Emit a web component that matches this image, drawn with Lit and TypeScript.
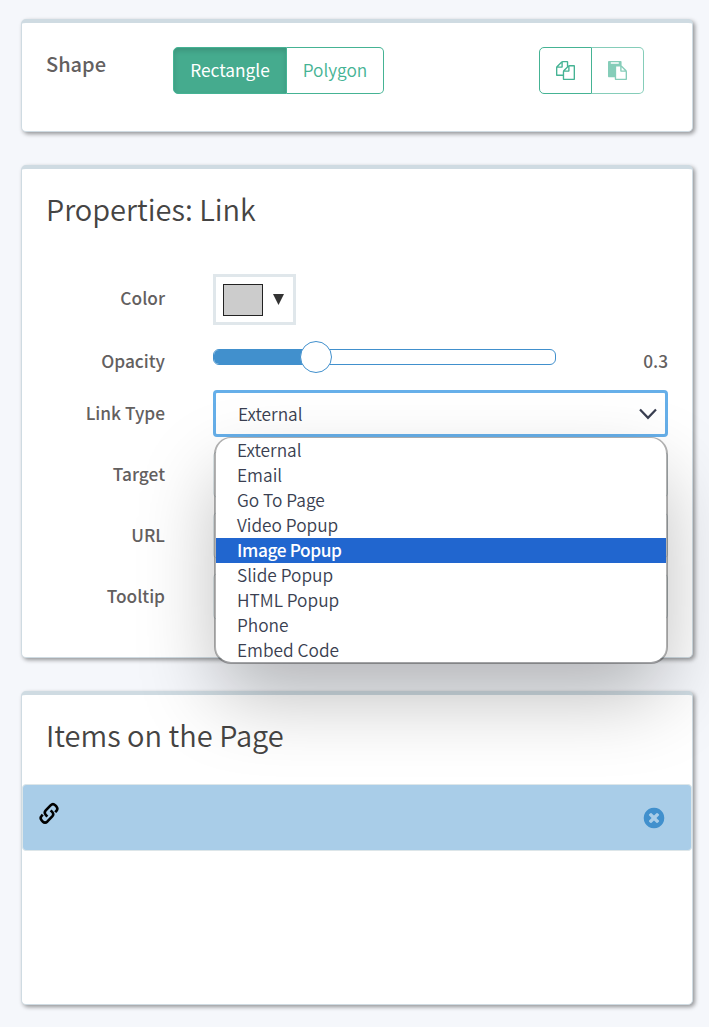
import { LitElement, html, css, svg } from "lit";
import { customElement, property } from "lit/decorators.js";
import { classMap } from "lit/directives/class-map.js";

const ICONS: Record<string, string> = {
  copy: "M1696 384q40 0 68 28t28 68v1216q0 40-28 68t-68 28h-960q-40 0-68-28t-28-68v-288h-544q-40 0-68-28t-28-68v-672q0-40 20-88t48-76l408-408q28-28 76-48t88-20h416q40 0 68 28t28 68v328q68-40 128-40h416zm-544 213l-299 299h299v-299zm-640-384l-299 299h299v-299zm196 647l316-316v-416h-384v416q0 40-28 68t-68 28h-416v640h512v-256q0-40 20-88t48-76zm956 804v-1152h-384v416q0 40-28 68t-68 28h-416v640h896z",
  paste: "M768 1664h896v-640h-416q-40 0-68-28t-28-68v-416h-384v1152zm256-1440v-64q0-13-9.5-22.5t-22.5-9.5h-704q-13 0-22.5 9.5t-9.5 22.5v64q0 13 9.5 22.5t22.5 9.5h704q13 0 22.5-9.5t9.5-22.5zm256 672h299l-299-299v299zm512 128v672q0 40-28 68t-68 28h-960q-40 0-68-28t-28-68v-160h-544q-40 0-68-28t-28-68v-1344q0-40 28-68t68-28h1088q40 0 68 28t28 68v328q21 13 36 28l408 408q28 28 48 76t20 88z",
  remove: "M1277 1122q0-26-19-45l-181-181 181-181q19-19 19-45 0-27-19-46l-90-90q-19-19-46-19-26 0-45 19l-181 181-181-181q-19-19-45-19-27 0-46 19l-90 90q-19 19-19 46 0 26 19 45l181 181-181 181q-19 19-19 45 0 27 19 46l90 90q19 19 46 19 26 0 45-19l181-181 181 181q19 19 45 19 27 0 46-19l90-90q19-19 19-46zm387-226q0 209-103 385.5t-279.5 279.5-385.5 103-385.5-103-279.5-279.5-103-385.5 103-385.5 279.5-279.5 385.5-103 385.5 103 279.5 279.5 103 385.5z",
};

@customElement("glyph-icon")
class GlyphIcon extends LitElement {
  static styles = css`
    :host { display: block; }
    .svg { display: block; width: 100%; height: 100%; fill: currentColor; }
    .heavy { stroke: #a9cde8; stroke-width: 0; }
  `;
  @property() name = "";
  render() {
    return html`<svg class="svg" viewBox="0 0 1792 1792">${svg`<path d=${ICONS[this.name]}></path>`}</svg>`;
  }
}

@customElement("app-root")
class AppRoot extends LitElement {
  static styles = css`
    :host {
      display: block;
      box-sizing: border-box;
      height: 1027px;
      padding: 19px 16px 0 21px;
      overflow: hidden;
      background: #f5f7fb;
      color: #63605f;
      font-family: "Noto Sans CJK SC", "Source Sans Pro", sans-serif;
    }
    * { box-sizing: border-box; }
    .card {
      background: #fff;
      border: 1px solid #cfdbe2;
      border-top-width: 4px;
      border-radius: 5px;
      margin-bottom: 33px;
      box-shadow: 2px 2px 4px rgba(0, 0, 0, 0.4);
    }
    .shape { height: 113px; padding: 24px 48px 0 24px; display: flex; align-items: flex-start; }
    .shape-label { width: 127px; font-size: 20px; line-height: 34px; font-weight: 500; }
    .group { display: flex; }
    .btn {
      height: 47px;
      padding-bottom: 1px;
      border: 1px solid #45b394;
      color: #45b394;
      font-size: 17.3px;
      line-height: 44px;
      font-weight: 350;
      display: flex; align-items: center; justify-content: center;
    }
    .btn.first { border-radius: 5px 0 0 5px; }
    .btn.last { border-radius: 0 5px 5px 0; border-left-width: 0; }
    .btn.rect { width: 114px; background: #45ab8e; color: #fff; font-weight: 400; box-shadow: inset 0 3px 5px rgba(0, 0, 0, 0.125); }
    .btn.poly { width: 97px; }
    .tools { margin-left: auto; }
    .btn.tool { width: 53px; padding-bottom: 0; }
    .btn.tool.last { width: 52px; opacity: 0.65; }
    .glyph { width: 19px; height: 19px; }
    .props { height: 493px; padding: 22px 24px 0 24px; }
    .title { font-size: 29px; line-height: 34px; font-weight: 350; color: #454443; white-space: nowrap; }
    .form { display: grid; grid-template-columns: 119px 455px; column-gap: 48px; width: 622px; margin-top: 49px; }
    .label { text-align: right; font-size: 17.3px; font-weight: 500; line-height: 26px; }
    .swatch { width: 83px; height: 51px; border: 3px solid #e0e7eb; padding: 0 9px 0 7px; display: flex; align-items: center; justify-content: space-between; }
    .chip { width: 40px; height: 32px; background: #ccc; border: 1px solid #222; }
    .caret { width: 11px; height: 11px; fill: #333; display: block; }
    .color { height: 66px; }
    .color.label { padding-top: 11px; }
    .opacity { height: 50px; display: flex; align-items: flex-start; }
    .opacity.label { justify-content: flex-end; padding-top: 8px; }
    .track { width: 343px; height: 16px; margin-top: 9px; border: 1px solid #4190cd; border-radius: 6px; position: relative; }
    .fill { height: 14px; background: #4190cd; border-radius: 5px 0 0 5px; }
    .thumb { position: absolute; top: -9px; left: 86px; width: 32px; height: 32px; border-radius: 50%; border: 1px solid #4190cd; background: #fff; }
    .value { margin-left: auto; padding-top: 8px; font-size: 17.3px; font-weight: 500; line-height: 26px; }
    .row { height: 61px; position: relative; }
    .row.label { padding-top: 10px; }
    .field { height: 47px; border: 1px solid #dde6e9; border-radius: 5px; }
    .select { height: 47px; border: 3px solid #66afe9; border-radius: 4px; padding: 0 7px 0 22px; display: flex; align-items: center; justify-content: space-between; color: #3a3f51; font-size: 17.3px; line-height: 26px; font-weight: 350; }
    .chevron { width: 20px; height: 12px; fill: none; stroke: #3a3f51; stroke-width: 2.2; }
    .menu {
      position: absolute; z-index: 2; left: 1px; top: 47px; width: 454px; height: 227px;
      border: 2px solid rgba(0, 0, 0, 0.3); border-top-width: 1px; border-radius: 17px; background: #fff; background-clip: padding-box;
      box-shadow: 0 35px 80px -5px rgba(0, 0, 0, 0.28);
    }
    .option { height: 25px; line-height: 23px; padding-left: 21px; font-size: 17.3px; font-weight: 350; color: #3a3f51; }
    .option.active { background: #2166cf; color: #fff; font-weight: 500; letter-spacing: -0.38px; }
    .items { height: 314px; padding: 22px 0 0 0; }
    .items .title { padding-left: 24px; }
    .item { height: 67px; margin-top: 33px; border: 1px solid #dde6e9; border-radius: 4px; background: #a9cde8; display: flex; align-items: flex-start; justify-content: space-between; padding: 17px 25px 0 15px; }
    .link { width: 22px; height: 23px; display: block; fill: none; stroke: #000; stroke-width: 2.5; }
    .remove { width: 24px; height: 24px; color: #4190cd; margin-top: 4px; }
  `;

  private options = ["External", "Email", "Go To Page", "Video Popup", "Image Popup", "Slide Popup", "HTML Popup", "Phone", "Embed Code"];
  private active = "Image Popup";

  render() {
    return html`
      <section class="card shape">
        <div class="shape-label">Shape</div>
        <div class="group">
          <div class="btn first rect">Rectangle</div>
          <div class="btn last poly">Polygon</div>
        </div>
        <div class="group tools">
          <div class="btn first tool"><glyph-icon class="glyph" name="copy"></glyph-icon></div>
          <div class="btn last tool"><glyph-icon class="glyph" name="paste"></glyph-icon></div>
        </div>
      </section>
      <section class="card props">
        <div class="title">Properties: Link</div>
        <div class="form">
          <div class="label color">Color</div>
          <div class="color"><div class="swatch">
            <div class="chip"></div>
            <svg class="caret" viewBox="0 0 11 11"><path d="M0 0H11L5.5 11Z"></path></svg>
          </div></div>
          <div class="label opacity">Opacity</div>
          <div class="opacity">
            <div class="track"><div class="fill" style="width:${0.3 * 100}%"></div><div class="thumb"></div></div>
            <div class="value">0.3</div>
          </div>
          <div class="label row">Link Type</div>
          <div class="row">
            <div class="select"><span>External</span>
              <svg class="chevron" viewBox="0 0 20 12"><path d="M2 1.5L10 9.8L18 1.5"></path></svg>
            </div>
            <div class="menu">
              ${this.options.map((o) => html`<div class=${classMap({ option: true, active: o === this.active })}>${o}</div>`)}
            </div>
          </div>
          ${["Target", "URL", "Tooltip"].map((l) => html`
            <div class="label row">${l}</div>
            <div class="row"><div class="field"></div></div>`)}
        </div>
      </section>
      <section class="card items">
        <div class="title">Items on the Page</div>
        <div class="item">
          <svg class="link" viewBox="0 0 21 22">
            <path d="M8.9 13.9L7.2 12Q5.6 10 7.4 8L12 3.2Q14.3 1 16.6 3.2L17.5 4.2Q19.5 6.5 17.5 8.6L16.5 9.8"></path>
            <path d="M12.1 7.9L13.8 9.8Q15.4 11.8 13.6 13.8L9 18.6Q6.7 20.8 4.4 18.6L3.5 17.6Q1.5 15.3 3.5 13.2L4.5 12"></path>
          </svg>
          <glyph-icon class="remove" name="remove"></glyph-icon>
        </div>
      </section>
    `;
  }
}
